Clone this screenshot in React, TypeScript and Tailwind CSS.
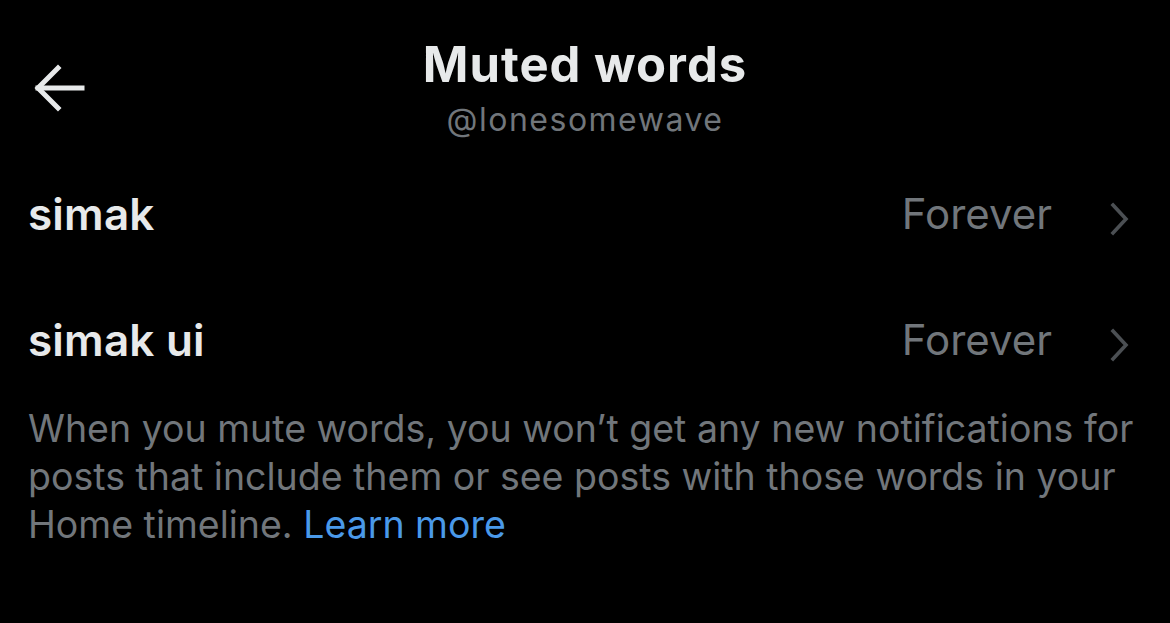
import React from 'react';

const words = [{ word: 'simak', duration: 'Forever' }, { word: 'simak ui', duration: 'Forever' }];

const BackArrow = () => (
  <svg width="52" height="48" viewBox="0 0 52 48" fill="none" stroke="#e7e9ea" strokeWidth="5" strokeLinecap="square">
    <path d="M4 24h44" />
    <path d="M24 4L4 24l20 20" strokeLinejoin="miter" />
  </svg>
);

const Chevron = () => (
  <svg width="24" height="36" viewBox="0 0 24 36" fill="none" stroke="#4b4f53" strokeWidth="3.6" strokeLinecap="square">
    <path d="M5 4l13 14L5 32" />
  </svg>
);

export default function App() {
  return (
    <div className="w-[1170px] h-[623px] bg-black overflow-hidden font-['Inter',sans-serif] text-[#e7e9ea]">
      <div className="grid grid-cols-[1fr_auto_1fr] items-start pt-[37px]">
        <div className="pl-[34px] pt-[27px]">
          <BackArrow />
        </div>
        <div className="flex flex-col items-center">
          <h1 className="text-[49px] leading-[56px] font-bold tracking-[1px]">Muted words</h1>
          <p className="mt-[7px] text-[32px] leading-[40px] tracking-[1.5px] text-[#71767b]">@lonesomewave</p>
        </div>
        <div />
      </div>

      <div className="mt-[11px]">
        {words.map((w) => (
          <div key={w.word} className="flex items-center h-[126px] px-[28px]">
            <span className="flex-1 text-[44px] leading-[52px] font-semibold tracking-[0.2px]">{w.word}</span>
            <span className="text-[42px] leading-[52px] text-[#71767b]">{w.duration}</span>
            <span className="ml-[56px] mr-[10px] mt-[9px]"><Chevron /></span>
          </div>
        ))}
      </div>

      <p className="mt-[2px] px-[28px] text-[37.5px] leading-[48px] text-[#71767b]">
        When you mute words, you won’t get any new notifications for
        <br />
        posts that include them or see posts with those words in your
        <br />
        Home timeline. <span className="text-[#4a99e9]">Learn more</span>
      </p>
    </div>
  );
}
